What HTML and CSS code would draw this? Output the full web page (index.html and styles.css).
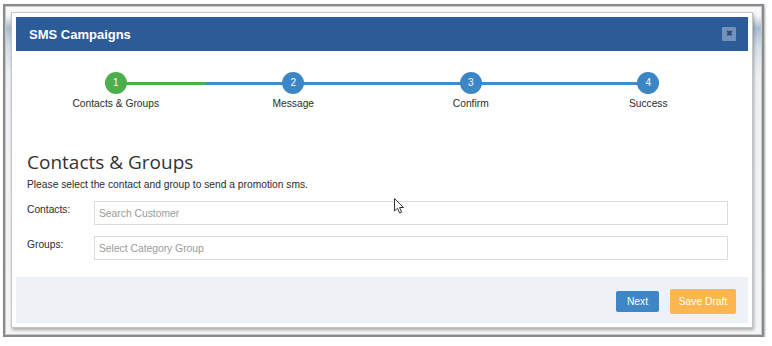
FILE: index.html
```html
<!DOCTYPE html>
<html>
<head>
<meta charset="utf-8">
<link rel="stylesheet" href="styles.css">
</head>
<body>
<div class="paper">
  <div class="modal">
    <div class="modal-header">
      <span class="modal-title">SMS Campaigns</span>
      <span class="close">&#x2716;</span>
    </div>
    <div class="modal-body">
      <div class="stepper">
        <div class="track"></div>
        <div class="step">
          <span class="dot done">1</span>
          <span class="step-label">Contacts &amp; Groups</span>
        </div>
        <div class="step">
          <span class="dot">2</span>
          <span class="step-label">Message</span>
        </div>
        <div class="step">
          <span class="dot">3</span>
          <span class="step-label">Confirm</span>
        </div>
        <div class="step">
          <span class="dot">4</span>
          <span class="step-label">Success</span>
        </div>
      </div>
      <h2 class="section-title">Contacts &amp; Groups</h2>
      <p class="section-desc">Please select the contact and group to send a promotion sms.</p>
      <div class="form">
        <div class="form-row">
          <label class="form-label">Contacts:</label>
          <input class="form-input" type="text" placeholder="Search Customer">
        </div>
        <div class="form-row">
          <label class="form-label">Groups:</label>
          <input class="form-input" type="text" placeholder="Select Category Group">
        </div>
      </div>
    </div>
    <div class="modal-footer">
      <button class="btn btn-next">Next</button>
      <button class="btn btn-draft">Save Draft</button>
    </div>
    <svg class="cursor" width="12" height="17" viewBox="0 0 12 17">
      <path d="M0.5 0.5 L0.5 13 L3.5 10.2 L5.6 15 L7.6 14.1 L5.5 9.5 L9.6 9.5 Z" fill="#fff" stroke="#333" stroke-width="1" stroke-linejoin="round"/>
    </svg>
  </div>
</div>
</body>
</html>
```

FILE: styles.css
```css
* { box-sizing: border-box; }
html, body { margin: 0; padding: 0; background: #fff; }
body { font-family: "Liberation Sans", Arial, sans-serif; }

.paper {
  margin: 4px 0 0 3px;
  width: 761px;
  padding: 6px 9px 7px 6px;
  border: 2px solid #8a8a8a;
  box-shadow: 1px 1px 2px rgba(0,0,0,0.35), inset 0 0 0 1px #c8c8c8;
  background: linear-gradient(to bottom, #fafbfc 0, #f3f5f7 10px, #a9bcd1 22px, #d3dde8 40px, #eef1f4 70px, #f4f5f6 100%);
}

.modal {
  position: relative;
  background: #fff;
  border: 1px solid #c4c4c4;
  padding: 4px;
  box-shadow: 1px 2px 3px rgba(0,0,0,0.3);
}

.modal-header {
  height: 34px;
  background: #2b5c98;
  display: flex;
  align-items: center;
  justify-content: space-between;
  padding: 0 12px 0 13px;
}
.modal-title {
  color: #fff;
  font-size: 13px;
  font-weight: bold;
}
.close {
  width: 14px;
  height: 14px;
  background: #7592bb;
  color: #2c4a76;
  font-size: 8px;
  font-weight: bold;
  line-height: 14px;
  text-align: center;
  border-radius: 1px;
}

.modal-body {
  padding: 21px 11px 17px 11px;
}

.stepper {
  position: relative;
  display: grid;
  grid-template-columns: repeat(4, 1fr);
}
.track {
  position: absolute;
  top: 9.5px;
  left: 12.5%;
  right: 12.5%;
  height: 3px;
  background: linear-gradient(to right, #4cae4c 0, #4cae4c 17%, #428bca 17%, #428bca 100%);
}
.step {
  position: relative;
  display: flex;
  flex-direction: column;
  align-items: center;
}
.dot {
  width: 22px;
  height: 22px;
  border-radius: 50%;
  background: #3d86c6;
  color: #fff;
  font-size: 10px;
  line-height: 22px;
  text-align: center;
}
.dot.done { background: #4cae4c; }
.step-label {
  margin-top: 3px;
  font-size: 10.25px;
  line-height: 14px;
  color: #2b2b2b;
}

.section-title {
  margin: 39px 0 0 0;
  font-family: "Open Sans", sans-serif;
  font-weight: normal;
  font-size: 19px;
  line-height: 24px;
  color: #333;
}
.section-desc {
  margin: 4px 0 0 0;
  font-size: 10.25px;
  line-height: 14px;
  color: #2b2b2b;
}

.form {
  margin-top: 9px;
  display: flex;
  flex-direction: column;
  gap: 11px;
}
.form-row {
  display: flex;
  align-items: flex-start;
}
.form-label {
  width: 67px;
  padding-top: 2px;
  font-size: 10.25px;
  line-height: 14px;
  color: #2b2b2b;
}
.form-input {
  width: 634px;
  height: 24px;
  border: 1px solid #dcdcdc;
  padding: 0 4px;
  font-family: "Liberation Sans", Arial, sans-serif;
  font-size: 10.3px;
  color: #333;
  background: #fff;
  outline: none;
}
.form-input::placeholder { color: #9a9a9a; }

.modal-footer {
  height: 46px;
  background: #eef2f6;
  display: flex;
  justify-content: flex-end;
  align-items: center;
  gap: 11px;
  padding: 3px 12px 0 0;
}
.btn {
  border: none;
  color: #fff;
  font-family: "Liberation Sans", Arial, sans-serif;
  font-size: 10.3px;
  border-radius: 2px;
  padding: 0;
}
.btn-next {
  width: 43px;
  height: 21px;
  background: #3f86c7;
}
.btn-draft {
  width: 66px;
  height: 25px;
  background: #fdb54f;
}

.cursor {
  position: absolute;
  left: 382px;
  top: 185px;
}
```
